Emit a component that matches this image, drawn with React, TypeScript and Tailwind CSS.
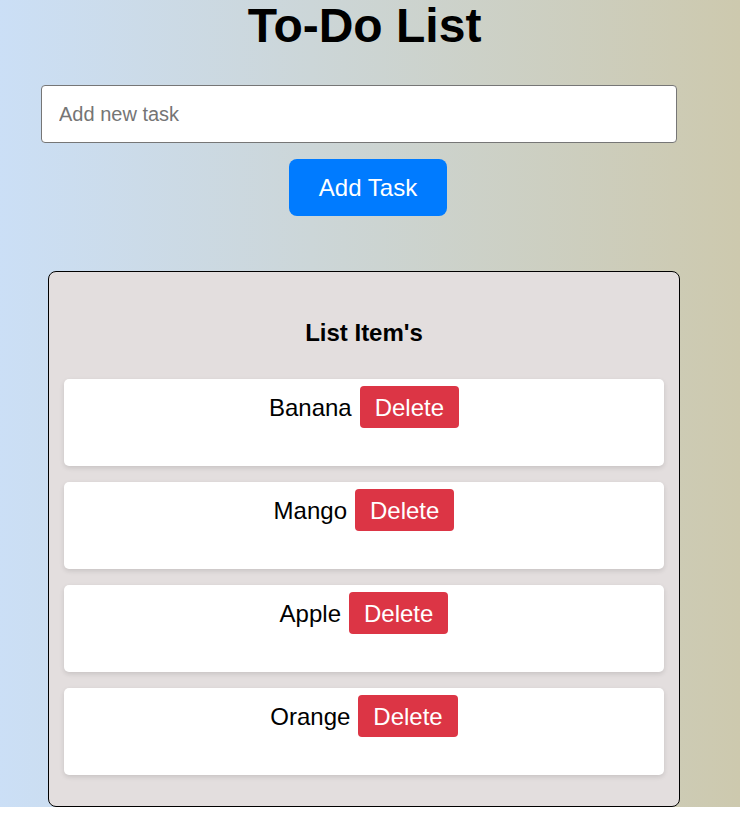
import { useState } from "react";

export default function App() {
  const [tasks, setTasks] = useState(["Banana", "Mango", "Apple", "Orange"]);
  const [text, setText] = useState("");

  return (
    <div className="w-[740px] bg-gradient-to-r from-[#cbdff6] to-[#cdc9ae] font-['Liberation_Sans',Arial,sans-serif] text-black">
      <h1 className="pr-[11px] pt-[2px] text-center text-[48px] font-bold leading-none">To-Do List</h1>

      <div className="mt-[35px] flex flex-col items-center">
        <input
          value={text}
          onChange={(e) => setText(e.target.value)}
          placeholder="Add new task"
          className="h-[58px] w-[636px] -translate-x-[11px] rounded-[4px] border border-[#767676] bg-white px-[17px] text-[20px] placeholder:text-[#757575] outline-none"
        />
        <button
          onClick={() => {
            if (text.trim()) setTasks([...tasks, text.trim()]);
            setText("");
          }}
          className="mt-[16px] h-[57px] w-[158px] -translate-x-[2px] rounded-[8px] bg-[#007bff] text-[24px] text-white"
        >
          Add Task
        </button>
      </div>

      <div className="ml-[48px] mt-[55px] w-[632px] rounded-[8px] border border-black bg-[#e3dede] px-[15px] pb-[31px] pt-[47px]">
        <h2 className="text-center text-[24px] font-bold leading-[1.15]">List Item's</h2>
        <ul className="mt-[32px] flex flex-col gap-[16px]">
          {tasks.map((t, i) => (
            <li
              key={i}
              className="flex h-[87px] justify-center rounded-[5px] bg-white pt-[7px] shadow-[0_2px_5px_rgba(0,0,0,0.12)]"
            >
              <div className="flex h-[42px] items-center gap-[8px] text-[24px]">
                <span className="pt-[2px]">{t}</span>
                <button
                  onClick={() => setTasks(tasks.filter((_, j) => j !== i))}
                  className="h-[42px] rounded-[4px] bg-[#dc3545] px-[15px] pt-[2px] text-white"
                >
                  Delete
                </button>
              </div>
            </li>
          ))}
        </ul>
      </div>
    </div>
  );
}
